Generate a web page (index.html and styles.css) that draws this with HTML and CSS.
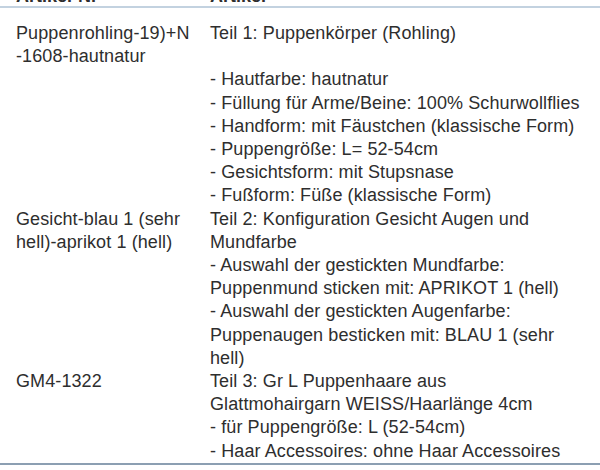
FILE: index.html
```html
<!DOCTYPE html>
<html lang="de">
<head>
<meta charset="utf-8">
<title>Artikel</title>
<link rel="stylesheet" href="styles.css">
</head>
<body>
<div class="table">
  <div class="thead">
    <div class="c1">Artikel-Nr</div>
    <div class="c2">Artikel</div>
  </div>
  <div class="tbody">
    <div class="row">
      <div class="c1">Puppenrohling-19)+N<br>-1608-hautnatur</div>
      <div class="c2">Teil 1: Puppenkörper (Rohling)<br>&nbsp;<br>- Hautfarbe: hautnatur<br>- Füllung für Arme/Beine: 100% Schurwollflies<br>- Handform: mit Fäustchen (klassische Form)<br>- Puppengröße: L= 52-54cm<br>- Gesichtsform: mit Stupsnase<br>- Fußform: Füße (klassische Form)</div>
    </div>
    <div class="row">
      <div class="c1">Gesicht-blau 1 (sehr<br>hell)-aprikot 1 (hell)</div>
      <div class="c2">Teil 2: Konfiguration Gesicht Augen und<br>Mundfarbe<br>- Auswahl der gestickten Mundfarbe:<br>Puppenmund sticken mit: APRIKOT 1 (hell)<br>- Auswahl der gestickten Augenfarbe:<br>Puppenaugen besticken mit: BLAU 1 (sehr<br>hell)</div>
    </div>
    <div class="row">
      <div class="c1">GM4-1322</div>
      <div class="c2">Teil 3: Gr L Puppenhaare aus<br>Glattmohairgarn WEISS/Haarlänge 4cm<br>- für Puppengröße: L (52-54cm)<br>- Haar Accessoires: ohne Haar Accessoires</div>
    </div>
  </div>
</div>
</body>
</html>
```
FILE: styles.css
```css
html, body {
  margin: 0;
  padding: 0;
  background: #ffffff;
}
body {
  font-family: "Liberation Sans", Arial, sans-serif;
  font-size: 18px;
  color: #2e2e2e;
  overflow: hidden;
}
.table {
  margin-top: -14px;
}
.thead,
.row {
  display: grid;
  grid-template-columns: 194px 1fr;
  padding-left: 16px;
  white-space: nowrap;
}
.thead {
  font-weight: bold;
  line-height: 20px;
  border-bottom: 2px solid #c3d2e0;
}
.tbody {
  padding-top: 14px;
  border-bottom: 2px solid #8c9fb2;
}
.row {
  line-height: 23.2px;
  letter-spacing: 0.1px;
}
```
